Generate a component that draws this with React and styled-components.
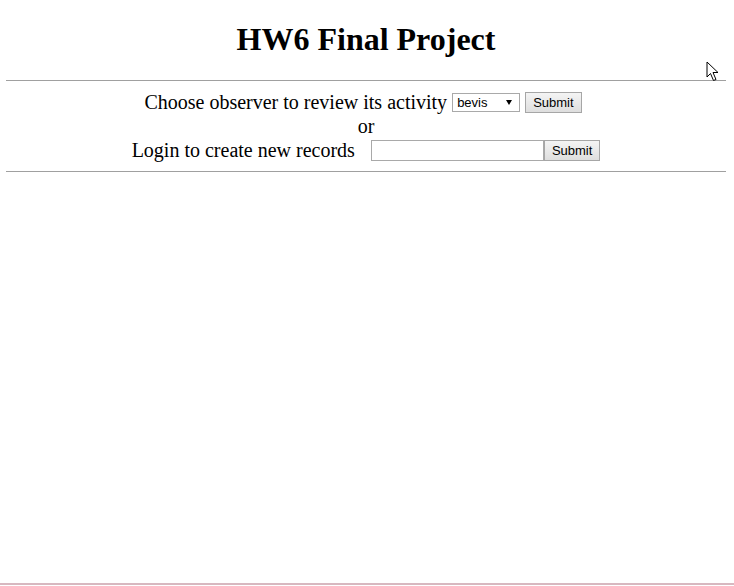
import React from "react";
import styled, { createGlobalStyle } from "styled-components";

const GlobalStyle = createGlobalStyle`
	html, body {
		margin: 0;
		padding: 0;
		background: #ffffff;
	}
	body {
		font-family: "Liberation Serif", "Times New Roman", serif;
		color: #000;
	}
`;

export default function App() {
	return (
		<>
			<GlobalStyle />
			<Page>
				<Title>HW6 Final Project</Title>
				<Rule />
				<Forms>
					<Row $shift={-3}>
						<span>Choose observer to review its activity</span>
						<SelectWrap>
							<Select defaultValue="bevis">
								<option value="bevis">bevis</option>
							</Select>
						</SelectWrap>
						<Button>Submit</Button>
					</Row>
					<Row>or</Row>
					<Row $gap={16}>
						<span>Login to create new records</span>
						<Login>
							<Input type="text" />
							<Button>Submit</Button>
						</Login>
					</Row>
				</Forms>
				<Rule />
				<BottomEdge />
				<Cursor width="14" height="21" viewBox="0 0 14 21">
					<path
						d="M1 1 L1 16 L4.5 12.5 L7.5 19.5 L10 18.5 L7 11.5 L12 11.5 Z"
						fill="#fff"
						stroke="#000"
						strokeWidth="1"
					/>
				</Cursor>
			</Page>
		</>
	);
}

const Page = styled.div`
	position: relative;
	display: flex;
	flex-direction: column;
	height: 586px;
	padding: 0 8px 0 6px;
	box-sizing: border-box;
`;

const Title = styled.h1`
	margin: 18px 0 0;
	height: 62px;
	text-align: center;
	font-size: 32px;
	font-weight: bold;
	line-height: 43px;
`;

const Rule = styled.div`
	height: 0;
	border-top: 1px solid #a0a0a0;
`;

const Forms = styled.div`
	display: flex;
	flex-direction: column;
	align-items: center;
	padding: 9px 0 9px;
	font-size: 20px;
`;

const Row = styled.div`
	display: flex;
	align-items: center;
	gap: ${(p) => p.$gap || 5}px;
	height: 24px;
	line-height: 24px;
	transform: translateX(${(p) => p.$shift || 0}px);
`;

const SelectWrap = styled.div`
	position: relative;
	display: flex;
	&::after {
		content: "";
		position: absolute;
		right: 8px;
		top: 7px;
		border-left: 3px solid transparent;
		border-right: 3px solid transparent;
		border-top: 5px solid #000;
		pointer-events: none;
	}
`;

const Select = styled.select`
	appearance: none;
	width: 68px;
	height: 19px;
	box-sizing: border-box;
	font-family: "Liberation Sans", Arial, sans-serif;
	font-size: 13px;
	color: #000;
	padding: 0 0 0 4px;
	border: 1px solid #a9a9a9;
	background: #fff;
	border-radius: 0;
	outline: none;
`;

const Button = styled.button`
	height: 21px;
	padding: 0 7px;
	font-family: "Liberation Sans", Arial, sans-serif;
	font-size: 13px;
	color: #000;
	background: linear-gradient(#f4f4f4, #dedede);
	border: 1px solid #a6a6a6;
	border-radius: 0;
`;

const Login = styled.div`
	display: flex;
	align-items: center;
`;

const Input = styled.input`
	width: 173px;
	height: 21px;
	box-sizing: border-box;
	border: 1px solid #a9a9a9;
	padding: 0 2px;
	font-size: 13px;
	border-radius: 0;
`;

const BottomEdge = styled.div`
	margin-top: auto;
	margin-left: -6px;
	margin-right: -8px;
	margin-bottom: 1px;
	height: 2px;
	background: #d8b8c0;
`;

const Cursor = styled.svg`
	position: absolute;
	left: 706px;
	top: 61px;
`;
